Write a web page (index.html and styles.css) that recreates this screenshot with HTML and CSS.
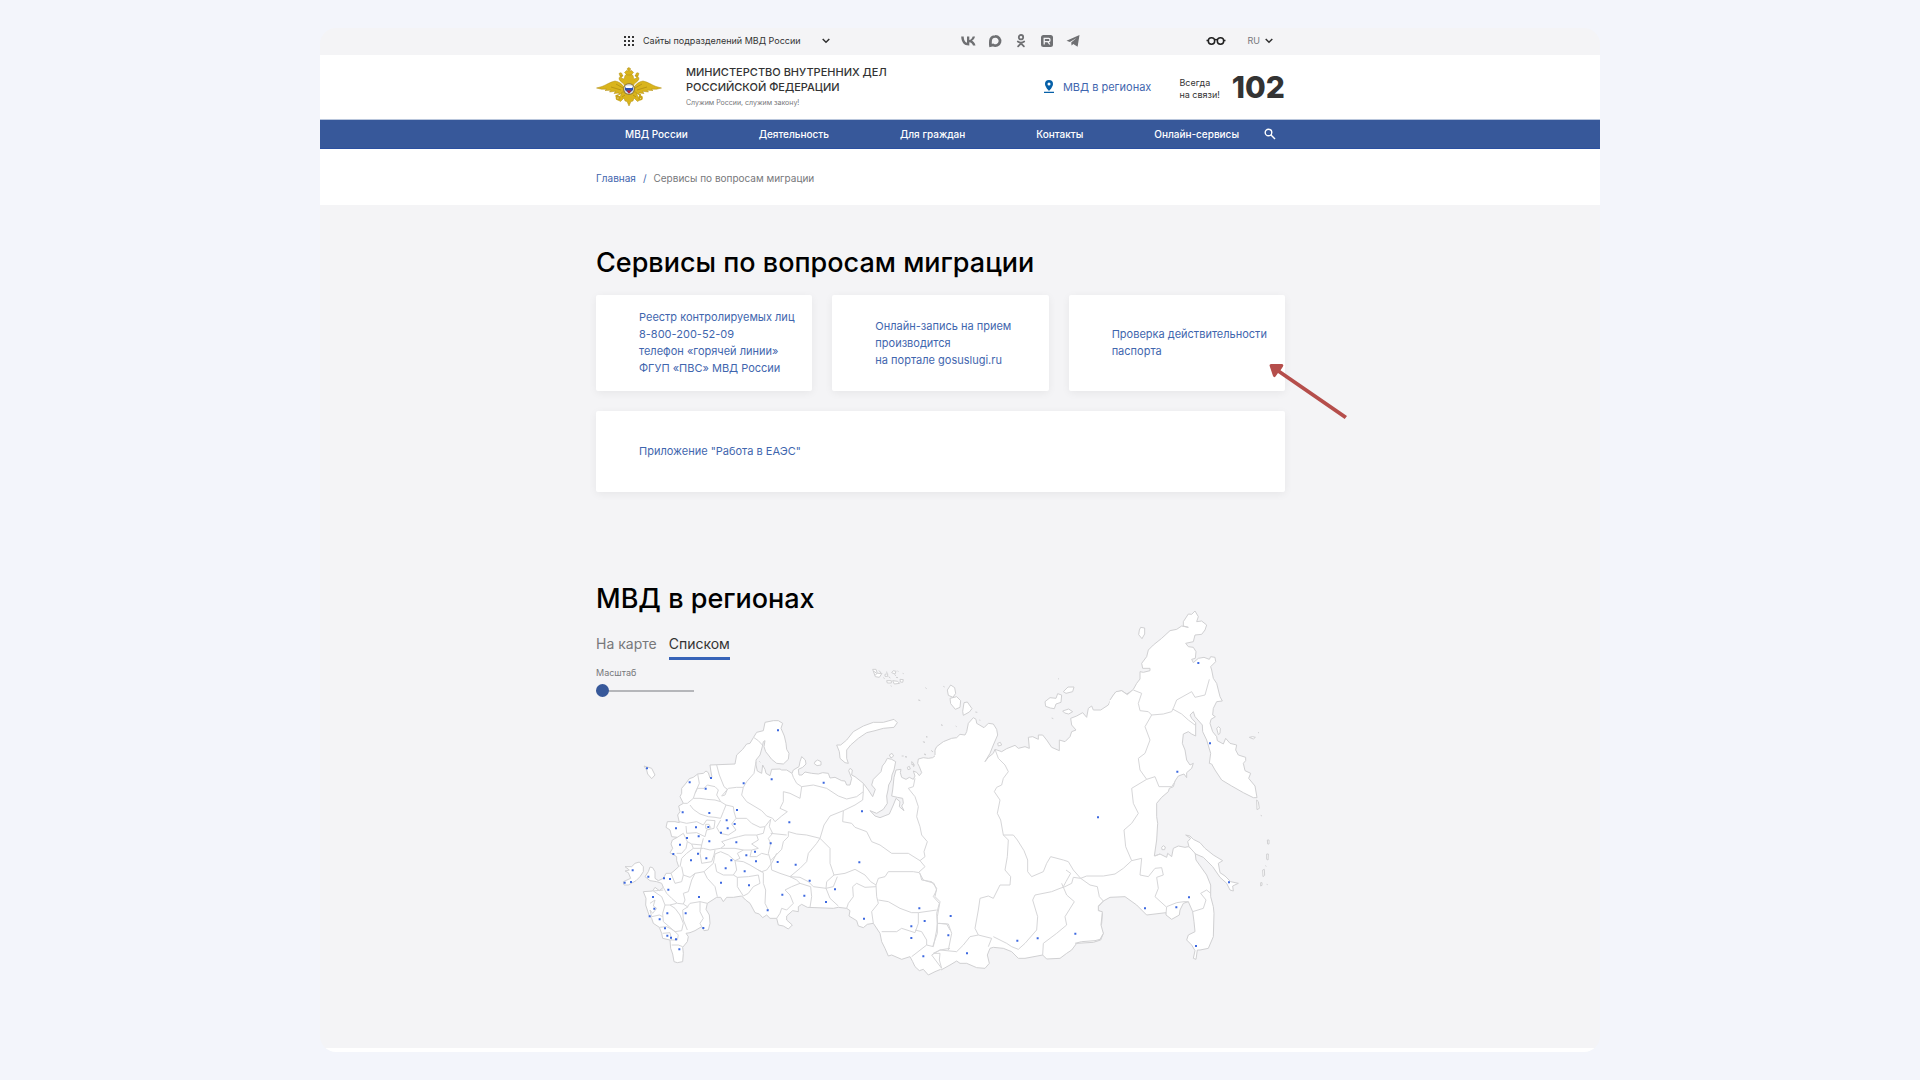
FILE: index.html
```html
<!DOCTYPE html>
<html lang="ru">
<head>
<meta charset="utf-8">
<meta name="viewport" content="width=device-width, initial-scale=1">
<title>Сервисы по вопросам миграции</title>
<link rel="stylesheet" href="styles.css">
</head>
<body>
<div class="page">
  <div class="band topbar">
    <div class="container topbar-row">
      <button class="sites" type="button">
        <svg width="10" height="10" viewBox="0 0 10 10" fill="#333"><path d="M0 0h2v2H0zM4 0h2v2H4zM8 0h2v2H8zM0 4h2v2H0zM4 4h2v2H4zM8 4h2v2H8zM0 8h2v2H0zM4 8h2v2H4zM8 8h2v2H8z"/></svg>
        <span class="sites-label">Сайты подразделений МВД России</span>
        <svg width="8" height="6" viewBox="0 0 8 6" fill="none" stroke="#333" stroke-width="1.500"><path d="M.7 1 4 4.300 7.300 1"/></svg>
      </button>
      <nav class="social" aria-label="Социальные сети">
        <a href="#" aria-label="ВКонтакте"><svg width="15" height="14" viewBox="0 0 15 14" fill="#6f7073"><path d="M7.800 11.500C3 11.500.4 8.200.2 2.500h2.500c.1 4.100 1.900 5.900 3.300 6.200V2.500h2.300V6c1.400-.1 2.900-1.700 3.400-3.500H14c-.4 2-1.900 3.600-3 4.300 1.100.5 2.800 1.800 3.500 4.700H12c-.6-1.700-1.900-3-3.700-3.200v3.200z"/></svg></a>
        <a href="#" aria-label="MAX"><svg width="14" height="14" viewBox="0 0 14 14"><path d="M7.200 2.400A4.600 4.600 0 1 1 5 10.900L2.500 11.600C2.300 10.500 2.400 8 2.500 6.700 2.700 4.200 4.700 2.400 7.200 2.400z" fill="none" stroke="#6f7073" stroke-width="2.800"/></svg></a>
        <a href="#" aria-label="Одноклассники"><svg width="14" height="14" viewBox="0 0 14 14" fill="none" stroke="#6f7073" stroke-width="1.800" stroke-linecap="round"><circle cx="7" cy="3.200" r="2.200"/><path d="M3.800 7.500c2 1.400 4.400 1.400 6.400 0M7 8.600v.8M7 9.400l-2.900 3M7 9.400l2.900 3"/></svg></a>
        <a href="#" aria-label="Rutube"><svg width="14" height="14" viewBox="0 0 14 14"><rect x="1" y="1" width="12" height="12" rx="2.500" fill="#6f7073"/><path d="M4.200 10.500V4.300h4.600q1.200 0 1.200 1.600T8.800 7.600H4.200M7.800 7.600l2 2.900" fill="none" stroke="#f4f4f6" stroke-width="1.300"/></svg></a>
        <a href="#" aria-label="Telegram"><svg width="14" height="14" viewBox="0 0 14 14" fill="#6f7073"><path d="M.5 6.800 13.500 1 11.600 12.700 7.300 9.900l-1.700 1.700-.4-3.100 5.300-4.600-6.600 4z"/></svg></a>
      </nav>
      <div class="tools">
        <button type="button" aria-label="Версия для слабовидящих"><svg width="20" height="10" viewBox="0 0 20 10" fill="none" stroke="#222" stroke-width="1.500"><circle cx="5.500" cy="5" r="3.200"/><circle cx="14.500" cy="5" r="3.200"/><path d="M8.500 4q1.500-1.200 3 0M.5 4.500h2M17.500 4.500h2"/></svg></button>
        <button class="lang" type="button">RU <svg width="8" height="6" viewBox="0 0 8 6" fill="none" stroke="#333" stroke-width="1.500"><path d="M.7 1 4 4.300 7.300 1"/></svg></button>
      </div>
    </div>
  </div>

  <header class="band header">
    <div class="container header-row">
      <a class="brand" href="#">
        <svg class="emblem" width="66" height="40" viewBox="0 0 66 40">
          <g fill="#d9b41c" stroke="#b08c12" stroke-width=".5" stroke-linejoin="round">
            <path d="M28 20C26 17 23 14.500 19 14c-5 1-9 4-13 5.500L.5 21l5 1.200h5l-1.500 1.300 6-.3-1.500 1.800 6-.7-1.500 2.200 5-.5-.5 2 6-3zM38 20c2-3 5-5.500 9-6 5 1 9 4 13 5.500l5.500 1.500-5 1.200h-5l1.500 1.300-6-.3 1.500 1.800-6-.7 1.500 2.200-5-.5.5 2-6-3z"/>
            <path d="M26 25l-2 5-2 3 2.500 1.500L28 31l1 3 2 .5 2 4.500 2-4.500 2-.5 1-3 3.500 3.500L44 33l-2-3-2-5z"/>
            <path d="M29 19c-1-3-5-4-6-7 0-2 2-4 4-3.500l-2 2.500 3 1c1-1 0-3 2-4.500h6c2 1.500 1 3.500 2 4.500l3-1-2-2.500c2-.5 4 1.500 4 3.500-1 3-5 4-6 7z"/>
            <path d="M31 8l-2.500-2.500 2-2 1.700.5L32 2.500h-.7v-1h.7V.8h1.500v.7h1v1h-.8l.2 1.500 1.700-.5 2 2L35 8zM24 9l-1-2.500 1.500-.8 1.500.8L26.500 9zM42 9l1-2.500-1.500-.8-1.500.8-.5 2.500z"/>
          </g>
          <path d="M20 17l7 4M15 20l10 3M46 17l-7 4M51 20l-10 3M26 30l3-2M40 30l-3-2" stroke="#a58310" stroke-width=".6"/>
          <g fill="none" stroke="#c9a316" stroke-width="1.800"><path d="M22 28l-2.500 1.500M44 27v4"/><circle cx="22" cy="31" r="1.500"/><circle cx="44.500" cy="31" r="1.500"/></g>
          <circle cx="33" cy="22" r="6" fill="#9a8338"/><circle cx="33" cy="22" r="4.800" fill="#dfe2ee"/>
          <path d="M29 20.500h8v2.500l-4 3.500-4-3.500z" fill="#2b50b0"/><path d="M30.500 23.500h5L33 26.500z" fill="#c8202c"/><path d="M30 19h6v2h-6z" fill="#fff"/>
        </svg>
        <span class="brand-text">
          <strong>МИНИСТЕРСТВО ВНУТРЕННИХ ДЕЛ<br>РОССИЙСКОЙ ФЕДЕРАЦИИ</strong>
          <small>Служим России, служим закону!</small>
        </span>
      </a>
      <a class="regions-link" href="#regions">
        <svg width="10" height="14" viewBox="0 0 10 14" fill="#0660a8"><path fill-rule="evenodd" d="M5 0a4 4 0 0 1 4 4c0 3-4 7-4 7S1 7 1 4a4 4 0 0 1 4-4zm0 2.600a1.500 1.500 0 1 0 0 3 1.500 1.500 0 0 0 0-3zM0 11.800h10V13H0z"/></svg>
        МВД в регионах
      </a>
      <div class="hotline"><span>Всегда<br>на связи!</span><b>102</b></div>
    </div>
  </header>

  <nav class="band mainnav" aria-label="Основное меню">
    <div class="container mainnav-row">
      <a href="#">МВД России</a><a href="#">Деятельность</a><a href="#">Для граждан</a><a href="#">Контакты</a>
      <span class="nav-end"><a href="#">Онлайн-сервисы</a>
      <button type="button" aria-label="Поиск"><svg width="12" height="12" viewBox="0 0 12 12" fill="none" stroke="#fff" stroke-width="1.400"><circle cx="4.500" cy="4.500" r="3.300"/><path d="M7 7l4 4"/></svg></button></span>
    </div>
  </nav>

  <div class="band crumbs">
    <div class="container crumbs-row"><a href="#">Главная</a><i>/</i><span>Сервисы по вопросам миграции</span></div>
  </div>

  <main class="band">
   <div class="container content">
    <h1>Сервисы по вопросам миграции</h1>
    <div class="cards">
      <a class="card" href="#">Реестр контролируемых лиц<br>8-800-200-52-09<br>телефон «горячей линии»<br>ФГУП «ПВС» МВД России</a>
      <a class="card" href="#">Онлайн-запись на прием<br>производится<br>на портале gosuslugi.ru</a>
      <a class="card" href="#">Проверка действительности<br>паспорта
        <svg class="pointer" width="80" height="56" viewBox="0 0 80 56" fill="#b54e4b"><path d="M.5 2.500Q.5 1 2 1h11q2 .500 1 2.500l-2.500 3.800L78 53l-2.300 3L9 10l-2.500 3.500Q5 15 4 13z"/></svg>
      </a>
      <a class="card card-wide" href="#">Приложение "Работа в ЕАЭС"</a>
    </div>

    <section class="regions" id="regions">
      <div class="regions-head">
        <h2>МВД в регионах</h2>
        <div class="tabs">
          <button type="button">На карте</button>
          <button class="active" type="button">Списком</button>
        </div>
        <label class="zoom">Масштаб<input type="range" min="0" max="100" value="0"></label>
      </div>
      <svg class="map" viewBox="0 0 2067 1158" role="img" aria-label="Карта регионов России">
        <g class="land">
          <g transform="translate(12 270)">
            <path d="M1050,150 1030,158 1022,168 1008,175 1006,185 1008,195 998,203 985,205 970,203 955,207 953,220 958,230 965,248 958,257 950,247 940,243 945,258 940,268 928,262 918,268 905,262 901,248 903,238 888,240 882,262 878,300 875,318 892,322 908,325 910,340 905,348 912,362 898,350 900,335 888,325 880,345 868,372 840,383 825,378 810,362 830,370 850,358 862,340 860,318 864,300 866,285 874,270 876,255 882,240 887,215 875,208 862,205 855,218 847,228 843,245 820,268 815,285 826,298 818,320 805,300 790,280 765,260 755,255 757,240 750,235 746,242 755,265 750,285 740,285 735,273 725,272 705,262 690,264 685,250 668,248 655,252 635,250 615,246 606,255 597,255 595,238 608,232 618,222 616,210 605,200 600,215 597,230 580,240 576,250 560,240 545,240 540,237 515,238 510,257 498,250 495,238 488,225 485,250 472,243 468,225 468,210 480,195 487,170 490,155 495,152 492,170 497,185 505,195 515,208 530,220 550,222 565,208 567,190 560,178 558,160 553,138 543,115 548,100 535,92 520,92 495,97 490,122 470,127 460,143 450,160 440,162 428,178 410,195 405,222 330,225 332,240 336,262 330,264 325,248 318,243 310,250 293,252 280,262 268,266 256,282 245,295 245,310 240,320 250,340 236,348 240,365 233,375 238,398 225,395 202,395 198,412 210,420 215,440 232,442 217,450 213,462 218,475 210,488 230,500 230,512 236,530 225,540 213,550 198,550 190,565 175,572 165,565 165,545 158,533 150,531 145,545 135,560 150,572 170,575 185,580 190,592 178,602 165,592 158,603 130,605 138,625 137,645 147,675 155,685 160,700 178,712 185,730 188,745 210,750 212,775 218,792 222,815 232,818 248,815 250,790 248,772 262,755 265,740 258,730 270,728 285,722 305,710 312,722 325,720 330,700 328,675 318,658 322,640 350,622 362,622 370,635 380,622 400,622 425,618 437,630 450,640 465,668 478,672 488,683 500,675 510,685 530,685 535,705 550,708 565,717 577,705 560,690 560,678 578,662 595,665 595,650 605,643 622,652 700,655 715,652 740,655 750,662 747,678 770,692 775,708 790,713 802,703 820,700 840,730 845,755 855,775 865,798 875,795 905,808 930,800 938,815 945,830 958,842 970,838 985,855 1005,845 1022,838"/>
            <path d="M75,530 95,530 105,520 118,516 130,530 130,545 120,560 108,572 85,585 72,585 70,575 92,565 85,548 75,543 88,540z"/>
            <path d="M132,228 155,235 165,255 155,266 143,252 140,240z"/>
            <path d="M710,165 722,165 740,150 760,125 790,108 820,97 850,97 882,88 892,98 882,112 850,115 825,122 800,128 775,145 752,165 740,180 740,205 745,220 735,218 720,205 718,185z"/>
            <path d="M645,215l8-5 10,5 0,10-12,2-8-6zM868,195l8-5 5,8-8,6zM905,198l6,0M955,30l6,2M1023,104l4,2M978,140l5,1M970,155l5,2M972,192l6,3M994,182l4,3M915,200l6,1M935,215l6,5-5,5zM478,214l3,3"/>
          </g>
          <g transform="translate(792 120)">
            <path d="M225,345 225,330 230,320 250,305 275,295 290,293 300,283 315,285 320,275 325,250 340,233 348,238 350,250 372,263 385,250 400,252 410,268 413,285 400,315 390,340 375,365 385,352 400,340 405,328 425,335 440,326 465,316 475,325 495,320 508,325 505,292 518,290 535,298 535,285 548,285 560,300 575,322 598,332 598,300 615,305 630,290 635,275 648,270 635,255 632,235 650,228 668,218 680,232 685,205 695,198 700,210 722,210 745,195 752,180 765,158 785,152 800,162 820,150 730,783 715,800 715,810 727,820 725,850 720,860 730,880 722,900 700,907 650,910 635,930 620,940 600,955 560,957 548,945 495,955 475,955 455,935 430,925 400,922 390,925 382,945 388,970 375,985 350,983 320,970 300,970 290,963 270,975 243,990"/>
            <path d="M262,150l10-15 12,8 3,17-8,12-14-6zM270,175l20-5 12,12-2,20-14,6-14-17zM312,188l10-2 14,20-8,10-18,10-2-12zM555,185l15-12 18,2 5-14 12,4-2,22-15,5-5,14-12-2-14-5zM610,155l14-14 18,0-4,14-20,5zM608,213l18-6 12,8-12,7-12-3zM413,310l8-3 4,8-10,3z"/>
            <path d="M38,88l10,0 4,12 14,0-8,12-12-2zM75,103l8-2 0,8-8,0zM95,98l5-6 8,2-3,8zM80,122l14,0 0,7-12,0zM98,122l15,2 6,6-16,2zM120,118l10,1-2,8-7-1zM108,112l6,1M128,100l3,1M92,137l3,2M70,113l4,3M42,94l8,6-4,6M56,92l6,4-3,6M86,110l5,4M104,104l4,3M112,92l3,3M78,96l4,1M196,143l4,3M176,180l3,1M250,139l4,2M244,255l4,1M287,258l3,2M190,305l4,4M198,290l3,1M194,342l4,2M215,332l4,4M594,116l3,1M575,234l5,2M346,216l6,1M358,240l3,1M135,350l5,1M142,382l6-3 3,8-7,2zM158,372l5,2-2,6z"/>
          </g>
          <g transform="translate(1332 0)">
            <path d="M210,300 220,285 228,275 245,272 262,284 280,268 290,250 300,237 300,215 310,217 330,212 330,205 308,205 305,190 320,170 325,150 340,135 365,115 390,92 410,88 425,78 445,82 430,78 430,65 445,42 455,43 465,33 475,50 470,65 485,63 500,75 495,90 485,103 465,105 460,125 437,130 445,140 460,142 468,155 466,175 455,178 460,188 475,175 492,172 508,178 512,170 525,172 527,185 512,200 515,210 520,235 530,250 535,270 540,290 547,303 530,305 520,325 518,345 526,350 513,358 510,370 518,395 530,410 532,422 550,432 557,415 570,430 590,435 587,450 595,465 617,472 617,482 610,490 615,512 632,520 626,535 645,558 651,593 640,593 610,578 575,558 545,540 525,510 515,492 508,490 512,460 500,420 488,395 487,375 465,350 460,335 450,345 455,355 467,368 467,408 455,402 445,395 430,402 427,430 435,450 440,480 450,495 460,490 455,505 440,518 440,533 432,522 415,528 405,543 400,560 388,565 385,575 365,592 350,610 350,650 353,670 350,720 343,768 360,762 380,772 383,760 395,770 400,745 415,738 435,742 445,740 465,755 468,780 500,825 512,855 512,890 520,920 522,940 520,1010 505,1045 480,1050 472,1050 468,1078 460,1075 465,1052 455,1035 440,1020 445,1005 465,995 462,965 458,935 445,905 430,910 420,930 418,945 395,958 378,945 378,938 320,945 290,915 255,890 210,892 190,903 175,918 175,932 187,935 183,975 190,1000 180,1018 165,1022 125,1025 105,1030"/>
            <path d="M437,705 450,708 460,718 480,728 495,745 520,765 548,782 535,790 540,818 555,828 572,845 595,850 578,858 580,873 570,870 560,850 540,832 518,800 490,772 467,762 447,740 443,725 452,715z"/>
            <path d="M298,90l4-8 12,2 0,18-8,14-10-12zM530,385l6-5 5,5-1,15-5,4zM628,412l10-2 8,2-6,5zM650,600l5,5 3,20-7,4zM662,646l4,2M682,720l5,0 0,12-4,0zM680,762l5,0-1,18-4-2zM676,797l3,2M668,810l5-2 1,18-5,4zM662,848l4,0 0,8-4,2zM680,853l3,1M654,399l3-2M365,742l5-5 6,4-2,8-8,0z"/>
          </g>
        </g>
        <g class="borders">
          <g transform="translate(12 270)">
            <path d="M350,225 358,255 372,290 382,298 375,315 365,318M293,252 298,280 285,310 280,325 262,340 250,340M285,310 292,295 312,295 322,285 345,290 355,300 350,315 362,335 345,330 320,328 300,325 280,325M362,335 378,345 370,365 362,385 345,382 325,380 300,372 280,358 270,345M365,318 385,295 410,292 430,292 440,275 462,250 468,215M430,292 425,315 440,335 465,350 485,362 500,378 518,385 525,395 545,378 562,365 540,355 550,335 550,305 570,310 600,325 605,290 590,280 580,262 576,250M605,290 640,285 680,295 715,318 740,327 770,320 790,305 790,280M790,305 788,330 765,345 730,362 690,378 672,405 660,445 690,475 690,520 702,555 680,575 678,595M730,362 728,395 755,400 765,412 800,425 815,455 840,465 875,490 925,490 960,512 975,530 955,548M945,265 940,290 925,295 945,320 955,350 950,380 960,410 965,435 982,455 972,485 975,500 960,512M378,345 400,350 402,365 408,385 395,402 408,420 385,435 360,430 350,412 362,390M408,385 440,385 455,400 480,412 495,410 512,388M470,435 490,430 495,410M512,388 508,410 518,430 505,445 512,460 505,490 512,512 545,478 550,455 565,440 565,425 590,432 620,435 660,445 650,460 625,490 620,515 600,535 570,560M512,430 560,435M238,395 260,400 290,395 310,405 320,390 345,392 342,415 320,420 315,440 290,428 260,430 258,408M317,403l10,0 5,10-5,6-10-4zM232,442 250,430 262,455 275,462 305,465 310,445M262,455 258,475 245,490 230,490M275,462 280,475 310,475 330,480 362,475 375,465 365,455 395,445 415,440 435,435 470,435 475,450 455,462 475,475 455,480 430,480 405,475 362,475M280,475 260,490 245,505 240,530M305,465 300,490 305,520 335,515 342,495 345,480M245,530 250,555 270,562 285,550 312,545 340,520 345,492 362,485 385,495 405,512 420,505 412,490 430,480M312,545 322,565 345,590 352,620M250,555 245,575 225,580 213,550M345,520 350,545 370,555 400,555 410,540 405,512 430,515 450,525 475,540 485,545 500,540 515,520 530,490M455,480 450,500 470,500 485,490 505,495M400,555 412,562 445,560 475,555 480,580 460,590 445,610 430,618 412,590 412,562M475,540 490,548 490,580 497,600 495,640 505,660M512,512 515,540 540,550 570,560 590,570 600,580 575,590 555,600 570,615 580,640 560,660 545,655 540,670 530,685M570,560 600,562 625,575 640,590 678,595 700,590 712,560M600,580 632,590 635,620 630,652M678,595 690,625 715,648M702,555 735,550 765,538 795,555 812,575 828,585 830,620 835,640 815,665 820,700M740,655 745,640 760,620 758,590 770,580 795,592 828,590M828,585 835,565 855,560 865,545 940,545 958,548 970,570 1002,580 1010,600 1000,620 1018,640 1010,670M835,630 865,635 900,655 935,668 955,668 1010,660M955,668 955,700 948,720 945,728 905,715 890,725 845,725M945,720 965,725 980,750 980,765 935,800M980,765 1000,770 1010,720 1012,700 1010,670M1018,700 1040,702 1050,720M1050,775 1020,780 1000,790 1020,790 1018,810 1025,835M265,605 250,610 255,630 250,642 232,640 215,625 200,610 190,592M265,605 275,570 285,550M160,603 185,620 195,645 210,645 230,640M250,642 262,650 270,640 300,635 322,640M300,635 300,665 310,685 300,700 305,710M195,645 188,670 190,695 225,725 245,722 250,700 240,675 225,655 210,645M265,650 248,660 250,690 262,720M150,640 165,630 160,648 170,655 158,670 150,660 155,680 178,675 188,680M178,712 200,710 215,718 225,725 235,735 232,750 210,750M188,730 210,728 215,750M215,765 235,765 248,770M160,603 190,600M462,143 475,152 487,165"/>
          </g>
          <g transform="translate(792 120)">
            <path d="M405,328 415,355 435,375 445,395 430,415 425,435 410,442 403,455 420,480 412,520 422,540 430,585 460,585 472,600 492,632 503,660 503,695 515,710 550,695 560,670 572,650 610,660 625,665 640,690 662,715 680,708 730,708 765,702 790,685 815,662M430,585 445,600 442,650 435,690 452,710 450,735 420,735 400,775 385,768 360,775 355,810 345,865 355,885 395,895 385,920M662,715 640,712 635,730 615,740 600,745 575,755 525,765 518,780 533,830 530,870 495,910 475,928 455,920 440,910 400,890M605,730 620,765 643,785 615,830 620,855 590,880 550,910 548,945M618,690 632,700 618,725 610,740M662,715 690,735 712,740 718,770 730,783M820,150 845,160 835,190 840,212 865,215 875,225 855,260 870,300 855,340 835,355 840,390 860,418 815,445 820,490 835,520 815,550 792,570 797,620 815,662 845,655 840,705 865,710 885,685 905,683 910,705 890,712 895,745 885,770 918,800M860,418 885,410 897,440 935,440 945,425M875,225 910,222 935,215 940,205 950,180 995,155 1005,172 1035,165 1048,118M938,207 965,222 985,240 1005,255M355,885 330,890 310,915 290,935 240,930 215,945 245,985M180,700 185,720 215,725 230,745 225,770 240,785 232,830 232,880 218,920M232,850 265,852 275,880 265,930"/>
          </g>
          <g transform="translate(1332 0)">
            <path d="M445,905 432,905 410,908 380,920 378,940M458,935 490,925 498,900 482,880 500,870 512,880M345,768 360,762"/>
          </g>
        </g>
        <g class="cities">
          <path transform="translate(12 270)" d="M534,121h0M141,235h0M269,277h0M333,264h0M317,296h0M431,280h0M515,268h0M671,278h0M248,367h0M328,369h0M411,360h0M786,364h0M228,415h0M288,412h0M325,411h0M380,391h0M404,402h0M383,415h0M363,428h0M568,397h0M296,439h0M261,444h0M240,464h0M328,454h0M409,457h0M512,460h0M220,492h0M294,491h0M273,511h0M319,505h0M394,511h0M439,496h0M465,485h0M468,514h0M533,516h0M587,524h0M778,517h0M377,535h0M434,544h0M98,541h0M145,560h0M192,565h0M210,567h0M74,578h0M93,576h0M205,599h0M363,578h0M447,586h0M629,572h0M705,598h0M547,614h0M613,617h0M678,636h0M159,621h0M297,621h0M163,656h0M202,670h0M257,670h0M149,679h0M179,688h0M503,661h0M310,714h0M195,715h0M202,737h0M213,743h0M228,748h0M238,778h0M792,686h0M958,655h0M974,693h0M934,709h0M934,744h0M970,799h0"/>
          <path transform="translate(792 120)" d="M272,828h0M265,886h0M321,940h0M472,902h0M533,895h0M646,881h0M714,532h0M855,805h0M952,395h0"/>
          <path transform="translate(1332 0)" d="M475,189h0M510,430h0M567,847h0M447,892h0M409,922h0M468,1038h0"/>
        </g>
      </svg>
    </section>
   </div>
  </main>
  <div class="page-end"></div>
</div>
</body>
</html>
```
FILE: styles.css
```css
* { box-sizing: border-box; }

body {
  margin: 0;
  padding: 28px 0;
  background: #f3f5fb;
  color: #333;
  font-family: Inter, "Noto Sans", sans-serif;
  font-size: 11px;
  line-height: 17px;
}

a { color: #3f66ae; text-decoration: none; }

button {
  display: inline-flex;
  align-items: center;
  padding: 0;
  border: 0;
  background: none;
  color: inherit;
  font: inherit;
  cursor: pointer;
}

svg { display: block; flex: none; }

.page {
  max-width: 1280px;
  margin: 0 auto;
  overflow: hidden;
  border-radius: 16px;
  background: #f4f4f6;
}
.page-end { height: 4px; background: #fff; }

.band { padding-right: 39px; }
.container { width: 100%; max-width: 689px; margin: 0 auto; }

.topbar-row { display: flex; align-items: center; height: 27px; padding: 0 12px 2px 28px; }
.sites { width: 206px; gap: 9px; font-size: 9px; white-space: nowrap; }
.sites-label { flex: 1; text-align: left; }
.social { display: flex; gap: 12px; margin-left: 131px; }
.tools { display: flex; align-items: center; gap: 22px; margin-left: auto; }
.lang { gap: 5px; color: #77787b; font-size: 9px; }

.header { background: #fff; }
.header-row { display: flex; align-items: center; height: 64px; }
.brand { display: flex; align-items: center; gap: 24px; color: #333; }
.brand-text { padding-top: 2px; }
.brand-text strong { display: block; font-size: 11px; font-weight: 500; line-height: 15px; }
.brand-text small { display: block; color: #77787b; font-size: 7px; line-height: 16px; }
.regions-link { display: flex; align-items: center; gap: 9px; margin-left: auto; }
.hotline { display: flex; align-items: center; gap: 12px; margin-left: 28px; }
.hotline span { padding-top: 3px; font-size: 9px; line-height: 12px; }
.hotline b { font-size: 30px; font-weight: 800; line-height: 32px; }

.mainnav {
  border-top: 1px solid #b9c6dc;
  border-bottom: 1px solid #2a4fa0;
  background: #37589a;
}
.mainnav-row { display: flex; align-items: center; justify-content: space-between; height: 28px; padding: 0 9px 0 29px; }
.mainnav a { color: #fff; font-size: 10px; font-weight: 500; }
.nav-end { display: flex; align-items: center; gap: 25px; }

.crumbs { background: #fff; }
.crumbs-row { display: flex; align-items: center; gap: 7px; height: 56px; padding-top: 2px; color: #77787b; font-size: 10px; }
.crumbs i { color: #3f66ae; font-style: normal; }

.content { padding: 40px 0 62px; }
h1, h2 { margin: 0; color: #000; font-size: 27px; font-weight: 500; line-height: 36px; }

.cards { display: grid; grid-template-columns: repeat(3, minmax(0, 1fr)); gap: 20px; margin-top: 14px; }
.card {
  position: relative;
  display: flex;
  flex-direction: column;
  justify-content: center;
  min-height: 81px;
  padding: 14px 12px 14px 43px;
  border-radius: 2px;
  background: #fff;
  box-shadow: 0 2px 8px rgba(0, 0, 0, .06);
  white-space: nowrap;
}
.card-wide { grid-column: 1 / -1; }
.pointer { position: absolute; top: 68px; left: 200px; }

.regions { display: grid; margin-top: 88px; }
.regions-head, .map { grid-area: 1 / 1; }
.regions-head { z-index: 1; justify-self: start; align-self: start; padding-top: 1px; }
.map { width: 100%; height: auto; margin-top: 20px; }

.tabs { display: flex; gap: 12px; margin-top: 17px; font-size: 14px; line-height: 20px; }
.tabs button { padding: 0 0 3px; border-bottom: 3px solid transparent; color: #77787b; }
.tabs .active { border-color: #3763b8; color: #333; }

.zoom { display: flex; flex-direction: column; gap: 3px; width: 98px; margin-top: 4px; color: #77787b; font-size: 9px; }
.zoom input { width: 100%; height: 13px; margin: 0; appearance: none; background: linear-gradient(#b5b6ba, #b5b6ba) center / 100% 2px no-repeat; }
.zoom input::-webkit-slider-thumb { width: 13px; height: 13px; appearance: none; border-radius: 50%; background: #37589a; }

.land { fill: #fff; stroke: #d0d0d2; stroke-width: 3; stroke-linejoin: round; }
.borders { fill: none; stroke: #d6d6d8; stroke-width: 3; stroke-linejoin: round; }
.cities { fill: none; stroke: #3c68e0; stroke-width: 6; stroke-linecap: square; }
```
